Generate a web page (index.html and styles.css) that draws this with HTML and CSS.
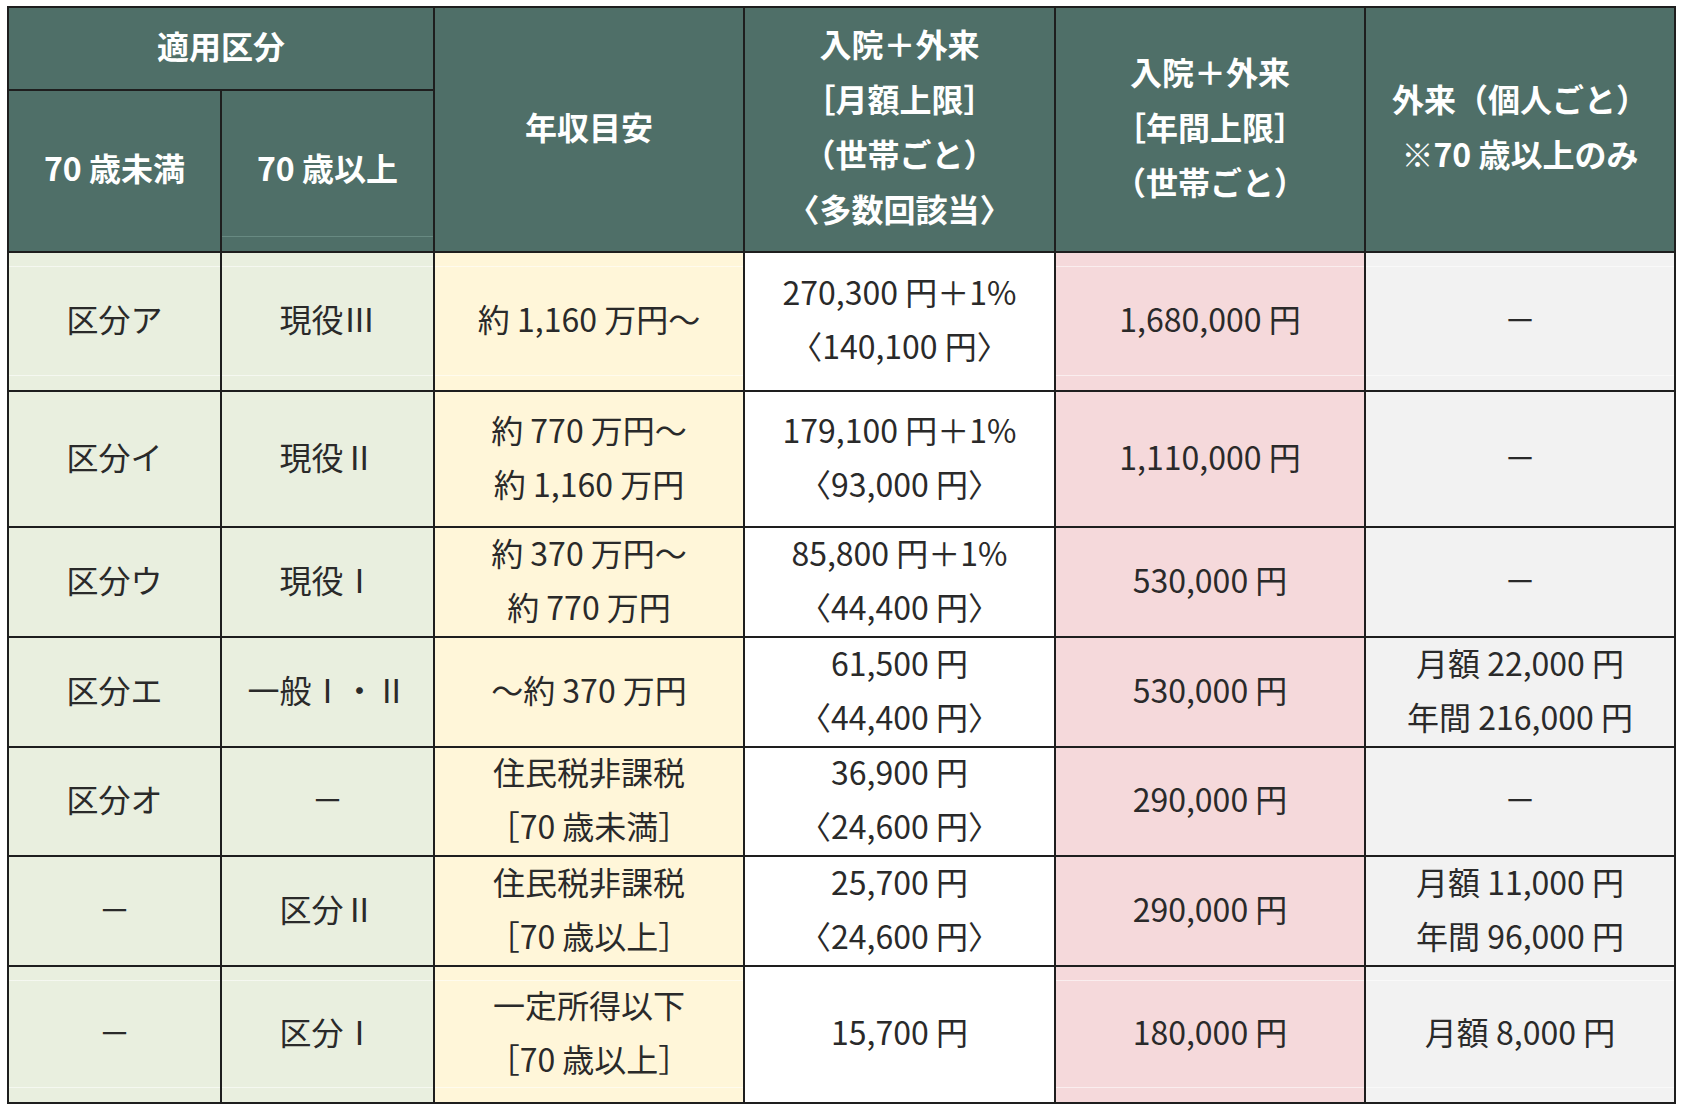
FILE: index.html
```html
<!DOCTYPE html>
<html lang="ja">
<head>
<meta charset="utf-8">
<title>高額療養費 自己負担限度額</title>
<link rel="stylesheet" href="styles.css">
</head>
<body>
<div class="sheet" role="table">
  <div class="cell head span-2c">適用区分</div>
  <div class="cell head span-2r">年収目安</div>
  <div class="cell head span-2r">入院＋外来<br>［月額上限］<br>（世帯ごと）<br>〈多数回該当〉</div>
  <div class="cell head span-2r">入院＋外来<br>［年間上限］<br>（世帯ごと）</div>
  <div class="cell head span-2r">外来（個人ごと）<br>※70 歳以上のみ</div>
  <div class="cell head">70 歳未満</div>
  <div class="cell head head-line">70 歳以上</div>

  <div class="cell green faint">区分ア</div>
  <div class="cell green faint">現役Ⅲ</div>
  <div class="cell yellow faint">約 1,160 万円〜</div>
  <div class="cell white faint">270,300 円＋1%<br>〈140,100 円〉</div>
  <div class="cell pink faint">1,680,000 円</div>
  <div class="cell gray faint">－</div>

  <div class="cell green">区分イ</div>
  <div class="cell green">現役Ⅱ</div>
  <div class="cell yellow">約 770 万円〜<br>約 1,160 万円</div>
  <div class="cell white">179,100 円＋1%<br>〈93,000 円〉</div>
  <div class="cell pink">1,110,000 円</div>
  <div class="cell gray">－</div>

  <div class="cell green">区分ウ</div>
  <div class="cell green">現役Ⅰ</div>
  <div class="cell yellow">約 370 万円〜<br>約 770 万円</div>
  <div class="cell white">85,800 円＋1%<br>〈44,400 円〉</div>
  <div class="cell pink">530,000 円</div>
  <div class="cell gray">－</div>

  <div class="cell green">区分エ</div>
  <div class="cell green">一般Ⅰ・Ⅱ</div>
  <div class="cell yellow">〜約 370 万円</div>
  <div class="cell white">61,500 円<br>〈44,400 円〉</div>
  <div class="cell pink">530,000 円</div>
  <div class="cell gray">月額 22,000 円<br>年間 216,000 円</div>

  <div class="cell green">区分オ</div>
  <div class="cell green">－</div>
  <div class="cell yellow">住民税非課税<br>［70 歳未満］</div>
  <div class="cell white">36,900 円<br>〈24,600 円〉</div>
  <div class="cell pink">290,000 円</div>
  <div class="cell gray">－</div>

  <div class="cell green">－</div>
  <div class="cell green">区分Ⅱ</div>
  <div class="cell yellow">住民税非課税<br>［70 歳以上］</div>
  <div class="cell white">25,700 円<br>〈24,600 円〉</div>
  <div class="cell pink">290,000 円</div>
  <div class="cell gray">月額 11,000 円<br>年間 96,000 円</div>

  <div class="cell green faint">－</div>
  <div class="cell green faint">区分Ⅰ</div>
  <div class="cell yellow faint">一定所得以下<br>［70 歳以上］</div>
  <div class="cell white faint">15,700 円</div>
  <div class="cell pink faint">180,000 円</div>
  <div class="cell gray faint">月額 8,000 円</div>
</div>
</body>
</html>
```

FILE: styles.css
```css
html, body {
  margin: 0;
  padding: 0;
  background: #ffffff;
}

body {
  font-family: "Noto Sans CJK JP", "Noto Sans", sans-serif;
  color: #2a2a2a;
}

.sheet {
  display: grid;
  grid-template-columns: 213px 213px 310px 311px 310px 310px;
  grid-template-rows: 83px 162px 139px 136px 110px 110px 109px 110px 137px;
  width: max-content;
  margin: 6px 0 0 7px;
  border-left: 2px solid #1e1e1e;
  border-top: 2px solid #1e1e1e;
}

.cell {
  box-sizing: border-box;
  border-right: 2px solid #1e1e1e;
  border-bottom: 2px solid #1e1e1e;
  padding-bottom: 7px;
  display: flex;
  align-items: center;
  justify-content: center;
  text-align: center;
  font-size: 32px;
  line-height: 54px;
  white-space: nowrap;
}

.head {
  background-color: #4f6f68;
  color: #ffffff;
  font-weight: 700;
  font-size: 32px;
  line-height: 55px;
}

.span-2c { grid-column: span 2; }
.span-2r { grid-row: span 2; }

.head-line {
  background-image: linear-gradient(to bottom,
    transparent calc(100% - 15px),
    #688a82 calc(100% - 15px),
    #688a82 calc(100% - 14px),
    transparent calc(100% - 14px));
}

.green  { background-color: #e9efdf; }
.yellow { background-color: #fff6d9; }
.white  { background-color: #ffffff; }
.pink   { background-color: #f5d9db; }
.gray   { background-color: #f2f2f2; }

.faint {
  background-image: linear-gradient(to bottom,
    transparent 13px,
    rgba(255, 255, 255, 0.55) 13px,
    rgba(255, 255, 255, 0.55) 14px,
    transparent 14px,
    transparent calc(100% - 15px),
    rgba(255, 255, 255, 0.55) calc(100% - 15px),
    rgba(255, 255, 255, 0.55) calc(100% - 14px),
    transparent calc(100% - 14px));
}
```
